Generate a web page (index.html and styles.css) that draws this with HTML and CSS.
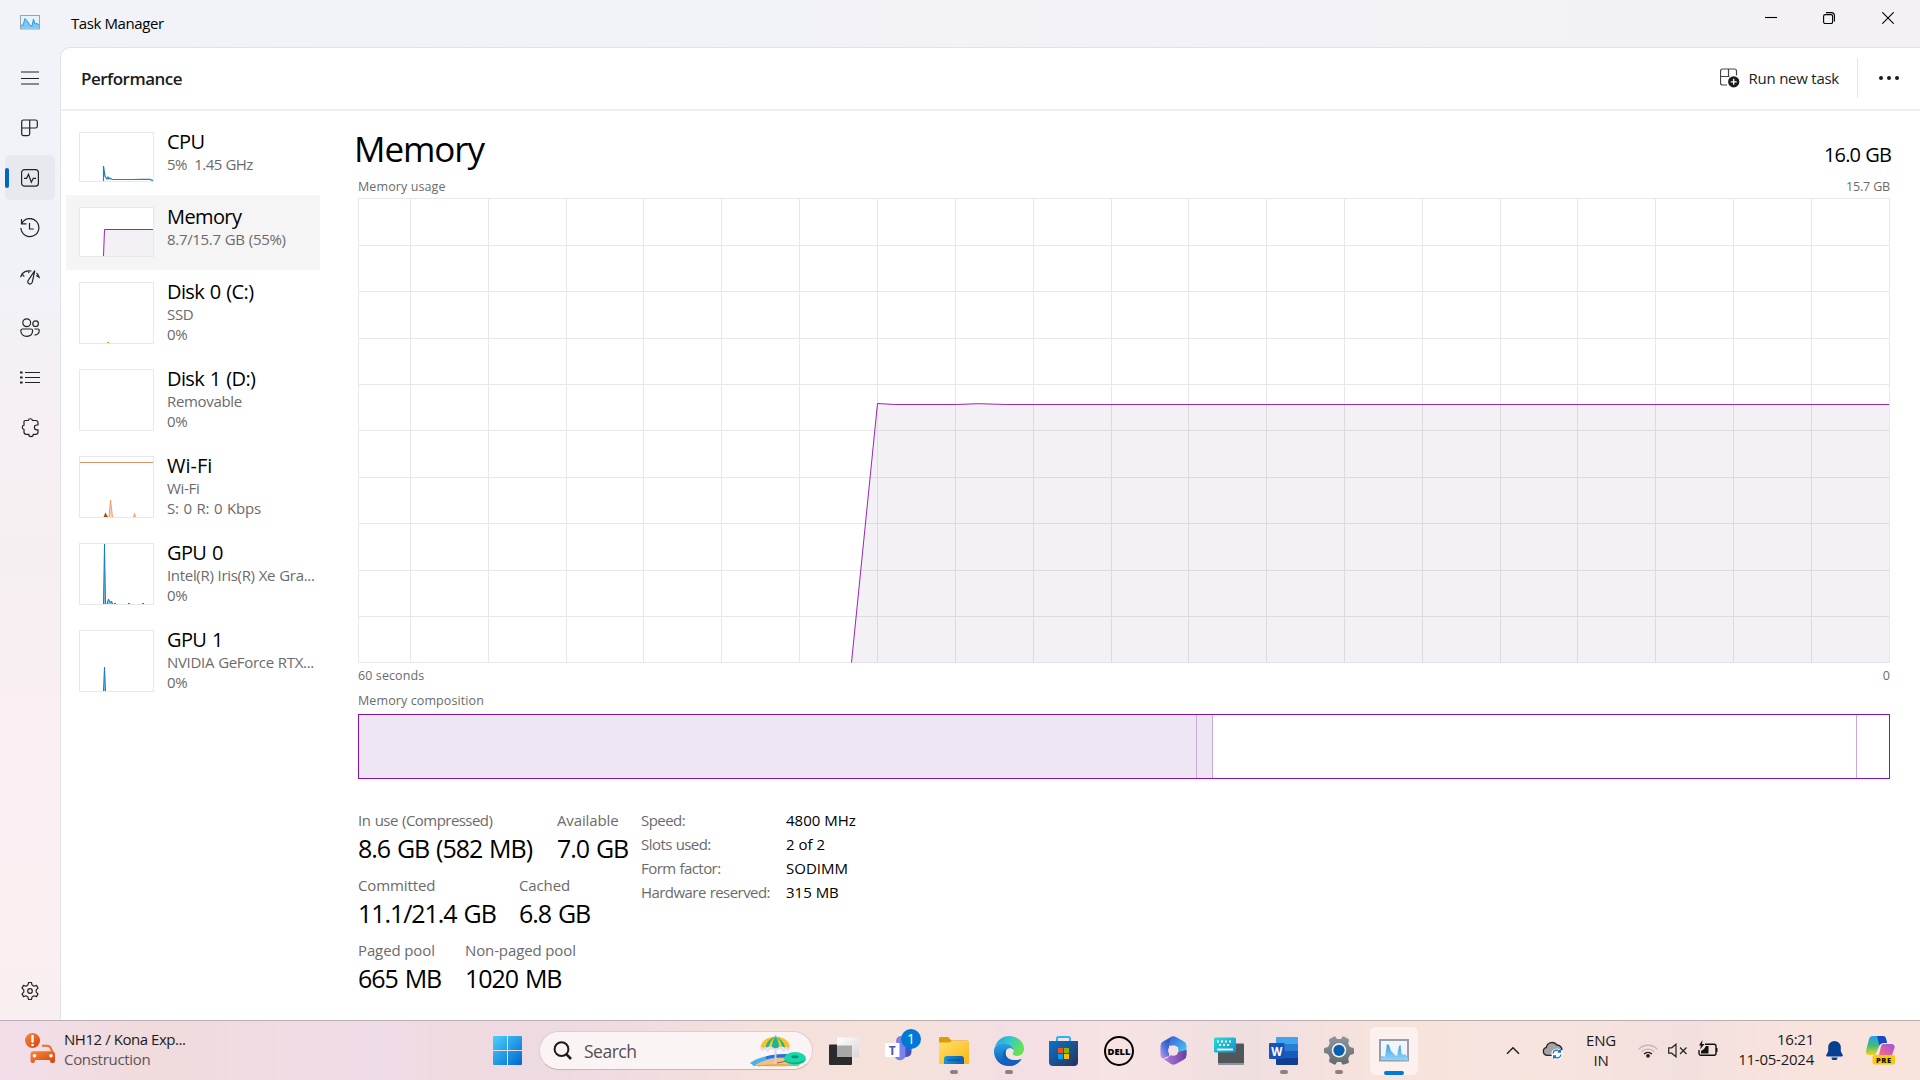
FILE: index.html
```html
<!DOCTYPE html>
<html lang="en">
<head>
<meta charset="utf-8">
<title>Task Manager</title>
<link rel="stylesheet" href="styles.css">
</head>
<body>
<div class="window">
  <aside class="rail">
    <div class="rail-logo">
      <svg width="20" height="15" viewBox="0 0 20 15"><rect x=".5" y=".5" width="19" height="13.500" fill="#e3f2fb" stroke="#97a5b1"/><path d="M1 13.500V10l2 .5L5 4l2.500 2L10 10.500l2 .5L13.500 4l1.500 5 2-.5L19 10v3.500z" fill="#7cc8f8"/><path d="M1 10l2 .5L5 3.500l2.500 3L10 10.500l2 .5L13.500 4l1.500 5 2-.5L19 10" fill="none" stroke="#2f96e0"/></svg>
    </div>
    <nav class="rail-nav">
      <a class="rail-item"><svg class="ic" viewBox="0 0 20 20"><path d="M1 4h18M1 10.500h18M1 16h18"/></svg></a>
      <a class="rail-item"><svg class="ic" viewBox="0 0 20 20"><path d="M3.500 2h12a1.800 1.800 0 0 1 1.800 1.800v4.400A1.800 1.800 0 0 1 15.500 10H9.700v5.800a1.800 1.800 0 0 1-1.800 1.800H3.500a1.800 1.800 0 0 1-1.800-1.800V3.800A1.800 1.800 0 0 1 3.500 2zM9.700 2v8M1.700 10h8"/></svg></a>
      <a class="rail-item active"><svg class="ic" viewBox="0 0 20 20"><rect x="1.600" y="1.600" width="16.800" height="16.600" rx="3"/><path d="M4 10.300h2.600l1.900-4 2.800 8 2-4H16"/></svg></a>
      <a class="rail-item"><svg class="ic" viewBox="0 0 20 20"><path d="M1.500 1v4.800h5M1.800 5.600A9 9 0 1 1 .9 10M9.500 5v6h4.300"/></svg></a>
      <a class="rail-item"><svg class="ic" viewBox="0 0 20 20"><path d="M.6 9.200L2 6l2.300 2.700M2 6C4.300 3.200 8 2.400 11.500 3M16.500 5c1.200 1 2 2.500 2.600 4.200l-2.900-1.700M8.300 2.800l.6 2.400M14.800 2.700L8 12.700a2.300 2.300 0 0 0 3.600 2.700c1-1 1-2.600 1.400-4.500z"/></svg></a>
      <a class="rail-item"><svg class="ic" viewBox="0 0 20 20"><g transform="translate(0 -.5)"><circle cx="6.700" cy="5.200" r="3.900"/><circle cx="15.600" cy="6.200" r="2.800"/><path d="M2.700 11.500h8.400a1.500 1.500 0 0 1 1.500 1.500c0 3.800-2.600 5.800-5.900 5.800S.8 16.800.8 13a1.700 1.700 0 0 1 1.900-1.500zM14.500 11.500h3.300A1.400 1.400 0 0 1 19.200 13c0 3-2 4.600-4.700 4.400"/></g></svg></a>
      <a class="rail-item"><svg class="ic" viewBox="0 0 20 20"><path d="M5 4.500h15M5 9.500h15M5 14.500h15"/><path d="M0 4.500h2.600M0 9.500h2.600M0 14.500h2.600" stroke-width="2.200"/></svg></a>
      <a class="rail-item"><svg class="ic" viewBox="0 0 20 20"><path transform="translate(0 -.8)" d="M5.200 3.300h3a2.200 2.200 0 0 1 4.300 0h3.200a2.300 2.300 0 0 1 2.300 2.300v2.200h-1.200a2.400 2.400 0 0 0 0 4.800H18v2.200a2.300 2.300 0 0 1-2.300 2.300h-2.400a2.300 2.300 0 0 1-4.600 0H6.300A2.300 2.300 0 0 1 4 14.800v-2.500a2.200 2.200 0 0 1 0-4.300V4.500a1.200 1.200 0 0 1 1.200-1.200z"/></svg></a>
    </nav>
    <a class="rail-item"><svg class="ic" viewBox="0 0 20 20"><circle cx="10" cy="10" r="2.300"/><path d="M8.600 1.500h2.800l.7 2.600 1.900 1.100 2.500-.8 1.500 2.700-1.800 1.800v2.200l1.800 1.800-1.500 2.700-2.500-.8-1.900 1.100-.7 2.600H8.600l-.7-2.600L6 14.800l-2.500.8L2 12.900l1.800-1.800V8.900L2 7.100l1.500-2.700 2.500.8 1.900-1.100z" stroke-linejoin="round"/></svg></a>
  </aside>
  <div class="frame">
    <header class="titlebar">
      <span class="app-title">Task Manager</span>
      <div class="caption">
        <svg viewBox="0 0 12 12"><path d="M0 5.500h12"/></svg>
        <svg viewBox="0 0 12 12"><rect x=".6" y="2.600" width="9" height="9" rx="1.600"/><path d="M3 .6h5.400a3 3 0 0 1 3 3V9.500"/></svg>
        <svg viewBox="0 0 12 12"><path d="M.3.300l11.400 11.400M11.700.300L.3 11.700"/></svg>
      </div>
    </header>
    <main class="panel">
      <div class="toolbar">
        <h1 class="page-name">Performance</h1>
        <div class="run">
          <svg width="20" height="20" viewBox="0 0 20 20"><path d="M16.500 7.500V3a2 2 0 0 0-2-2h-12a2 2 0 0 0-2 2v12a2 2 0 0 0 2 2H7M8.500 1v7.500M.5 8.500h9" fill="none" stroke="#444" stroke-width="1.200"/><circle cx="13.700" cy="13.800" r="5.600" fill="#1b1b1b"/><path d="M13.700 10.800v6M10.700 13.800h6" stroke="#fff" stroke-width="1.300"/></svg>
          <span>Run new task</span>
        </div>
        <div class="more"><i></i><i></i><i></i></div>
      </div>
      <div class="content">
        <ul class="devices">
          <li class="device short"><svg class="thumb" viewBox="0 0 75 50"><path d="M24.500 49V34l1.500 10 2 3 1-2 1 2 1-1 2 1.500h20l10-.2h8l2 1h2" class="cpu"/></svg><div><b>CPU</b><p class="speed">5%&nbsp; 1.45 GHz</p></div></li>
          <li class="device short selected"><svg class="thumb" viewBox="0 0 75 50"><path d="M24.500 49L25.500 22.500H74V49z" class="mem-fill"/><path d="M24.500 49L25.500 22.500H74" class="mem"/></svg><div><b>Memory</b><p>8.7/15.7 GB (55%)</p></div></li>
          <li class="device"><svg class="thumb" viewBox="0 0 75 62"><path d="M28.500 60.500h1.500" class="disk"/></svg><div><b>Disk 0 (C:)</b><p>SSD</p><p>0%</p></div></li>
          <li class="device"><svg class="thumb" viewBox="0 0 75 62"></svg><div><b>Disk 1 (D:)</b><p>Removable</p><p>0%</p></div></li>
          <li class="device"><svg class="thumb" viewBox="0 0 75 62"><path d="M1 6.500h73" class="net-line"/><path d="M24.500 61l2-4.500 2.500 4.500z" class="net-fill"/><path d="M30 61l1.500-17L33.500 61M54.500 61l1-3.500 1.200 3.500" class="net"/></svg><div><b class="wide">Wi-Fi</b><p>Wi-Fi</p><p class="wide-sub">S: 0 R: 0 Kbps</p></div></li>
          <li class="device"><svg class="thumb" viewBox="0 0 75 62"><path d="M24.500 61L25.500 1 26.500 61M28 61l1.500-5 2 4 1-2 1 3" class="gpu"/><path d="M35 60.500h2M49 60.500h2M63 60.500h2" class="cpu"/></svg><div><b>GPU 0</b><p>Intel(R) Iris(R) Xe Gra...</p><p>0%</p></div></li>
          <li class="device"><svg class="thumb" viewBox="0 0 75 62"><path d="M24.500 61l1-24 1 24" class="gpu"/></svg><div><b>GPU 1</b><p>NVIDIA GeForce RTX...</p><p>0%</p></div></li>
        </ul>
        <section class="detail">
          <div class="head"><h2>Memory</h2><span class="total">16.0 GB</span></div>
          <div class="cap"><span>Memory usage</span><span class="max">15.7 GB</span></div>
          <svg class="chart" viewBox="0 0 1532 465">
            <path class="grid" d="M.5 0V465M52.500 0V465M130.500 0V465M208.500 0V465M285.500 0V465M363.500 0V465M441.500 0V465M519.500 0V465M597.500 0V465M675.500 0V465M753.500 0V465M830.500 0V465M908.500 0V465M986.500 0V465M1064.500 0V465M1142.500 0V465M1219.500 0V465M1297.500 0V465M1375.500 0V465M1453.500 0V465M1531.500 0V465M0 .5H1532M0 47.500H1532M0 93.500H1532M0 140.500H1532M0 186.500H1532M0 232.500H1532M0 279.500H1532M0 325.500H1532M0 372.500H1532M0 418.500H1532M0 464.500H1532"/>
            <path class="mem-fill" d="M493.500 464.500L519.500 205.500l17 1h62l22-.8 28 .8H1531v258z"/>
            <path class="mem" d="M493.500 464.500L519.500 205.500l17 1h62l22-.8 28 .8H1531"/>
          </svg>
          <div class="cap cap-time"><span>60 seconds</span><span>0</span></div>
          <div class="cap cap-comp"><span>Memory composition</span></div>
          <div class="composition"><div class="used"></div><div class="modified"></div><div class="standby"></div><div class="free"></div></div>
          <div class="stats">
            <div class="stat-rows">
              <div class="stat-row"><dl class="usage"><dt class="tight">In use (Compressed)</dt><dd>8.6 GB (582 MB)</dd></dl><dl><dt>Available</dt><dd>7.0 GB</dd></dl></div>
              <div class="stat-row"><dl class="commit"><dt>Committed</dt><dd>11.1/21.4 GB</dd></dl><dl><dt>Cached</dt><dd>6.8 GB</dd></dl></div>
              <div class="stat-row"><dl class="pool"><dt>Paged pool</dt><dd>665 MB</dd></dl><dl><dt>Non-paged pool</dt><dd>1020 MB</dd></dl></div>
            </div>
            <div class="facts">
              <span>Speed:</span><em>4800 MHz</em>
              <span>Slots used:</span><em>2 of 2</em>
              <span>Form factor:</span><em>SODIMM</em>
              <span>Hardware reserved:</span><em>315 MB</em>
            </div>
          </div>
        </section>
      </div>
    </main>
  </div>
</div>
<footer class="taskbar">
  <div class="widget">
    <svg width="30" height="30" viewBox="0 0 30 30">
      <defs><linearGradient id="org" x1="0" y1="0" x2="1" y2="1"><stop offset="0" stop-color="#f58a3c"/><stop offset="1" stop-color="#d9400a"/></linearGradient></defs>
      <circle cx="7.500" cy="7.500" r="7.500" fill="url(#org)"/><path d="M7.500 3v5.500" stroke="#fff" stroke-width="2.400" stroke-linecap="round"/><circle cx="7.500" cy="12" r="1.300" fill="#fff"/>
      <path d="M17 12.700h5c2 0 3 .8 3.700 2.300l2 4.500" fill="none" stroke="#ef6c2a" stroke-width="2"/>
      <path d="M8 18.300h19c2 0 3 1.500 3 3.500V28a2 2 0 0 1-2 2h-1a2 2 0 0 1-2-2v-1H10v1a2 2 0 0 1-2 2H7.500a2 2 0 0 1-2-2v-7a3 3 0 0 1 2.500-2.700z" fill="url(#org)"/><circle cx="9.500" cy="22.700" r="1.800" fill="#fff"/><circle cx="26" cy="22.700" r="1.800" fill="#fff"/>
    </svg>
    <div><p class="w1">NH12 / Kona Exp...</p><p class="w2">Construction</p></div>
  </div>
  <div class="apps">
    <div class="app start">
      <svg width="29" height="29" viewBox="0 0 29 29"><defs><linearGradient id="win" x1="0" y1="0" x2="1" y2="1"><stop offset="0" stop-color="#4cd0fb"/><stop offset="1" stop-color="#0067cf"/></linearGradient></defs><path d="M1 0h13v14H0V1a1 1 0 0 1 1-1zM15 0h13a1 1 0 0 1 1 1v13H15zM0 15h14v14H1a1 1 0 0 1-1-1zM15 15h14v13a1 1 0 0 1-1 1H15z" fill="url(#win)"/></svg>
    </div>
    <div class="search">
      <svg width="20" height="20" viewBox="0 0 20 20"><circle cx="8.500" cy="8.200" r="6.900" fill="none" stroke="#1c1c1c" stroke-width="2"/><path d="M13.300 13.200l4.700 4.800" stroke="#1c1c1c" stroke-width="2.600"/></svg>
      <span>Search</span>
      <svg class="beach" width="56" height="32" viewBox="0 0 56 32">
        <path d="M0 28C10 21 24 19 39 19l8 2-9 4-20 5-14 1z" fill="#45b4ec"/><path d="M16 21.500c6-1.800 14-2.500 23-2.500l-2 4c-9-1-15-.500-21 1z" fill="#2a6fe0"/>
        <path d="M5 30c8-5 20-8 32-7l14 7c-10 2-38 2-46 0z" fill="#f1c185"/><path d="M8 31c12-1.500 34-1.500 41 0" stroke="#d79a50" fill="none"/>
        <ellipse cx="45" cy="23.500" rx="11" ry="6.500" fill="#17d8a8"/><path d="M34.500 25c1 5 20 6 21-1-3 4-17 5-21 1z" fill="#10a98a"/><ellipse cx="45" cy="21.800" rx="3.600" ry="1.500" fill="#0c8f78"/>
        <path d="M25.500 12V29" stroke="#ded0e4" stroke-width="1.800"/><path d="M27 28l10-2" stroke="#9c6a3c" stroke-width="1"/>
        <path d="M10.500 12C12 5 18 2 25.500 1.500 33 2 39 5 40 12l-3 1.500-5-2-6.500 2-6.500-2-5 2z" fill="#fbc02d"/>
        <path d="M25.500 1.500C18 5 16 8 16 12.500l3-1c1-5 3-7 6.500-10zM25.500 1.500C32 5 34.500 8 35 12.500l-3-1c-.6-5-3-7-6.500-10zM22 12.500l3.500 1 3.500-1c0-4-1-8-3.500-11-2.500 3-3.500 7-3.500 11z" fill="#19b88e"/>
        <path d="M10.500 12l2 3 2.500-2 2.500 2.500 3-3 5 2.500 5-2.500 3 3 2.500-2.500 2 2 2-3" fill="none" stroke="#e6dbf0" stroke-width="2"/><circle cx="25.500" cy="1.200" r="1" fill="#bdb0c8"/>
      </svg>
    </div>
    <div class="app">
      <svg width="30" height="28" viewBox="0 0 30 28"><defs><linearGradient id="tv" x1="0" y1="0" x2="1" y2="1"><stop offset="0" stop-color="#fff"/><stop offset="1" stop-color="#d9d6d6"/></linearGradient></defs><rect y="7.500" width="23" height="20.500" rx="1" fill="#2b2b2b"/><rect x="8" y=".5" width="22" height="19.500" rx="1" fill="url(#tv)"/><path d="M8 8.500h15V20H9a1 1 0 0 1-1-1z" fill="#a9a8a8"/></svg>
    </div>
    <div class="app">
      <svg class="teams" width="34" height="34" viewBox="0 0 34 34">
        <circle cx="16" cy="12" r="5" fill="#7b83eb"/><path d="M17 15h9.500v8a5 5 0 0 1-5 5H17z" fill="#4b53bc"/><path d="M10 15h10.500v11a5.500 5.500 0 0 1-10.500 2z" fill="#7b83eb"/><path d="M14 15v13h-4z" fill="#5059c9"/>
        <rect y="14" width="14.500" height="14" fill="#fff"/><text x="7.300" y="25.500" text-anchor="middle" class="svg-t" fill="#4b53bc">T</text>
      </svg>
      <span class="badge">1</span>
    </div>
    <div class="app running">
      <svg width="30" height="27" viewBox="0 0 30 27"><defs><linearGradient id="fo" x1="0" y1="0" x2="1" y2="1"><stop offset="0" stop-color="#ffe068"/><stop offset="1" stop-color="#fbb614"/></linearGradient><linearGradient id="fb" x1="0" y1="0" x2="1" y2="0"><stop offset="0" stop-color="#1b93dc"/><stop offset="1" stop-color="#0b5fae"/></linearGradient></defs><path d="M0 1.500A1.500 1.500 0 0 1 1.500 0H9l3.500 3.500H28A2 2 0 0 1 30 5v3H0z" fill="#dd9b08"/><path d="M0 5.500h10L13 4h17v22a1 1 0 0 1-1 1H1a1 1 0 0 1-1-1z" fill="url(#fo)"/><path d="M5 27v-5a3 3 0 0 1 3-3h14a3 3 0 0 1 3 3v5z" fill="url(#fb)"/><path d="M8.500 23h13" stroke="#0a4a8c" stroke-width="1"/></svg>
    </div>
    <div class="app running">
      <svg width="30" height="30" viewBox="0 0 30 30"><defs><linearGradient id="e1" x1="0" y1="0" x2="1" y2=".4"><stop offset="0" stop-color="#1ea0e8"/><stop offset=".5" stop-color="#36c6cf"/><stop offset="1" stop-color="#66e352"/></linearGradient><linearGradient id="e2" x1="0" y1="0" x2="0" y2="1"><stop offset="0" stop-color="#2aa5e8"/><stop offset="1" stop-color="#0c56ad"/></linearGradient></defs>
        <path d="M1 11C3 4 8.500 0 15 0c8.500 0 15 6 15 12.500 0 4.500-3 7.500-7.500 7.500-3.500 0-4.500-1.500-4-2.500 1-1 1-2 1-3C19 10 15 7 10 7 6 7 3 8.500 1 11z" fill="url(#e1)"/>
        <path d="M0 15.500C0 10 4 7 10 7c5 0 9 3 9.300 7-1.300-2.500-7.300-3-7.800 2.500-.3 5.500 5.500 9.500 15.500 6.500-2 4.500-7 7-12 7C6.500 30 0 24 0 15.500z" fill="url(#e2)"/><path d="M11.500 13c-4 3.500-4 13 3.500 17 5 0 10-2.500 12.500-7-9.500 3-15.700-1-15.500-6.500z" fill="#1261c0"/><path d="M11.700 17c0-4 5-6 7.500-3 .8 2-1.500 3.500 0 5 2.500 2 8 1 9 1l-1.500 3c-8 2.500-15 0-15-6z" fill="#f6e4df"/></svg>
    </div>
    <div class="app">
      <svg width="29" height="30" viewBox="0 0 29 30"><defs><linearGradient id="st" x1="0" y1="0" x2="1" y2="1"><stop offset="0" stop-color="#0b74c8"/><stop offset="1" stop-color="#27305c"/></linearGradient></defs><path d="M8 7V2.500A1.500 1.500 0 0 1 9.500 1h10A1.500 1.500 0 0 1 21 2.500V7" fill="none" stroke="#27b5f4" stroke-width="2"/><path d="M0 5h29v21a4 4 0 0 1-4 4H4a4 4 0 0 1-4-4z" fill="url(#st)"/><path d="M9 12h5v5H9z" fill="#f25022"/><path d="M15 12h5v5h-5z" fill="#7fba00"/><path d="M9 18h5v5H9z" fill="#00a4ef"/><path d="M15 18h5v5h-5z" fill="#ffb900"/></svg>
    </div>
    <div class="app">
      <svg width="30" height="30" viewBox="0 0 30 30"><circle cx="15" cy="15" r="14" fill="none" stroke="#000" stroke-width="2"/><text x="15" y="18.600" text-anchor="middle" textLength="23" lengthAdjust="spacingAndGlyphs" class="dell">DELL</text></svg>
    </div>
    <div class="app">
      <svg width="27" height="29" viewBox="0 0 27 29"><defs><linearGradient id="m1" x1="0" y1="1" x2="1" y2="0"><stop offset="0" stop-color="#d09af0"/><stop offset=".5" stop-color="#3f6fd8"/><stop offset="1" stop-color="#2b3fae"/></linearGradient><linearGradient id="m2" x1="0" y1="0" x2="1" y2="1"><stop offset="0" stop-color="#3c5fd8"/><stop offset="1" stop-color="#48d2f5"/></linearGradient><linearGradient id="m3" x1="0" y1="0" x2="1" y2="0"><stop offset="0" stop-color="#b47fe6"/><stop offset="1" stop-color="#6a3f9c"/></linearGradient></defs><path d="M12 .5L3 5.500A5 5 0 0 0 .5 10v9c0 1.500 1 3 2.500 3.500L9 20V9.500z" fill="url(#m1)"/><path d="M12 .5c2-.7 3 0 4 .5l8 4.500A5 5 0 0 1 26.500 10v9L18 16v-5L9 9.500C9 5 9.500 2 12 .5z" fill="url(#m2)"/><path d="M26.500 14v5a5 5 0 0 1-2.500 4.500L16 28a5 5 0 0 1-5 0l-8-5.500c3 1 5-.5 6-2.500l9-4z" fill="url(#m3)"/><circle cx="13.300" cy="14.500" r="5.200" fill="#f4e2e3"/></svg>
    </div>
    <div class="app">
      <svg width="30" height="28" viewBox="0 0 30 28"><defs><linearGradient id="kb" x1="0" y1="0" x2="1" y2="1"><stop offset="0" stop-color="#25e0cf"/><stop offset="1" stop-color="#128dd0"/></linearGradient></defs><rect x="4" y="6.500" width="26" height="21" rx="1" fill="#50565a"/><path d="M4 26h26v1a1 1 0 0 1-1 1H5a1 1 0 0 1-1-1z" fill="#8d959a"/><rect y=".5" width="22" height="15" rx="1.500" fill="url(#kb)"/><path d="M3 4.500h16M5 8h12" stroke="#fff" stroke-width="2" stroke-dasharray="2 2"/><path d="M3 12.500h16" stroke="#fff" stroke-width="1.800"/></svg>
    </div>
    <div class="app running">
      <svg width="29" height="28" viewBox="0 0 29 28"><path d="M7 1a1 1 0 0 1 1-1h20a1 1 0 0 1 1 1v6H7z" fill="#41a5ee"/><path d="M7 7h22v7H7z" fill="#2b7cd3"/><path d="M7 14h22v7H7z" fill="#185abd"/><path d="M7 21h22v6a1 1 0 0 1-1 1H8a1 1 0 0 1-1-1z" fill="#103f91"/><rect y="6" width="15.500" height="16" rx="1" fill="#1b52b5"/><text x="7.700" y="18.500" text-anchor="middle" class="svg-w">W</text></svg>
    </div>
    <div class="app running">
      <svg width="30" height="29" viewBox="0 0 30 29"><defs><linearGradient id="ge" x1="0" y1="0" x2="0" y2="1"><stop offset="0" stop-color="#8d969c"/><stop offset="1" stop-color="#626b70"/></linearGradient></defs><path d="M10 .5h1.500L13 3h4l1.500-2.500H20l4.500 2.500.5 1-.8 3.500 1.800 3.500 3.500 1 .5 1v4l-.5 1-3.500 1-1.800 3.500.8 3.500-.5 1L20 28.500h-1.500L17 26h-4l-1.500 2.500H10L5.500 26l-.5-1 .8-3.500L4 18l-3.500-1L0 16v-3l.5-1L4 11l1.800-3.500L5 4l.5-1z" fill="url(#ge)"/><circle cx="15" cy="14.300" r="7.200" fill="#f2f2f2"/><circle cx="15" cy="14.300" r="5.600" fill="#0c5fb0"/></svg>
    </div>
    <div class="app running current">
      <svg width="30" height="23" viewBox="0 0 30 23"><defs><linearGradient id="tm" x1="0" y1="0" x2="0" y2="1"><stop offset="0" stop-color="#3f9fe0"/><stop offset="1" stop-color="#8ed6fb"/></linearGradient></defs><rect x="1" y="1" width="28" height="20.500" fill="#f1f5f7" stroke="#93a0a9" stroke-width="2"/><path d="M2 20.500V17l4 .5L8 5l2 1 2 6 4 4 2 1 2-10 1.500-1 1 8 1.500 2 2-1 3 4v2.500z" fill="url(#tm)"/></svg>
    </div>
  </div>
  <div class="tray">
    <svg class="chev" width="14" height="9" viewBox="0 0 14 9"><path d="M1 7.800l6-6 6 6" fill="none" stroke="#222" stroke-width="1.500"/></svg>
    <svg class="cloud" width="21" height="19" viewBox="0 0 21 19"><path d="M5 15a4.300 4.300 0 0 1-.5-8.400A6 6 0 0 1 15 4.300 5 5 0 0 1 20 9" fill="#a3a3a3"/><path d="M10 14.300H5A4.100 4.100 0 0 1 4.300 6.300 6 6 0 0 1 15 4a5 5 0 0 1 5 5" fill="#a3a3a3" stroke="#252525" stroke-width="1.300"/><circle cx="15" cy="13" r="5.600" fill="#fff"/><path d="M11 12.500a4 4 0 0 1 7-2M18.300 8.500v2.500h-2.500M19 13.500a4 4 0 0 1-7 2M11.700 17.500V15h2.500" fill="none" stroke="#1b6ec2" stroke-width="1.300"/></svg>
    <div class="lang">ENG<br>IN</div>
    <svg class="wifi" width="20" height="15" viewBox="0 0 20 15"><g fill="none" stroke-width="1.400"><path d="M.6 6.200a13 13 0 0 1 18.800 0M3.500 8.700a9.500 9.500 0 0 1 13 0" stroke="#c9b7b7"/><path d="M6 11a6 6 0 0 1 8 0" stroke="#222"/></g><circle cx="10" cy="12.800" r="1.900" fill="#222"/></svg>
    <svg class="vol" width="20" height="15" viewBox="0 0 20 15"><path d="M.7 4.800h3L8 1.200v12.600l-4.300-3.600h-3z" fill="none" stroke="#222" stroke-width="1.200"/><path d="M12 4.500l6.500 6.500M18.500 4.500L12 11" stroke="#222" stroke-width="1.200"/></svg>
    <svg class="bat" width="20" height="17" viewBox="0 0 20 17"><path d="M7 4.300h9a2 2 0 0 1 2 2v7a2 2 0 0 1-2 2H3a2 2 0 0 1-2-2V10" fill="none" stroke="#111" stroke-width="1.400"/><path d="M3 13.500V11l3-2 2-3h2.500v7.500z" fill="#111"/><path d="M18 8h1.500v4H18z" fill="#111"/><path d="M4.500 0L1 5.500h2L2 9.500l4.500-5.500H4z" fill="#111"/></svg>
    <div class="clock">16:21<br>11-05-2024</div>
    <svg class="bell" width="17" height="19" viewBox="0 0 17 19"><path d="M8.500 0A6.300 6.300 0 0 0 2.200 6.300v4L.3 14a1 1 0 0 0 .9 1.500h14.600a1 1 0 0 0 .9-1.500l-1.900-3.700v-4A6.300 6.300 0 0 0 8.500 0zM5.500 16.500a3 3 0 0 0 6 0z" fill="#053f92"/></svg>
    <svg class="copilot" width="30" height="29" viewBox="0 0 30 29"><defs><linearGradient id="c1" x1="0" y1="0" x2="0" y2="1"><stop offset="0" stop-color="#1fa2f0"/><stop offset=".5" stop-color="#3fba7c"/><stop offset="1" stop-color="#f5d21f"/></linearGradient><linearGradient id="c2" x1="1" y1="0" x2="0" y2="1"><stop offset="0" stop-color="#a04fe6"/><stop offset="1" stop-color="#f76d7a"/></linearGradient></defs><path d="M6 0h11a3 3 0 0 1 3 2.500L21 7h-4a4 4 0 0 0-3.600 2.500L10 17.500c-.5 1-1 1.500-2 1.500H3a3 3 0 0 1-3-4L3 3a4 4 0 0 1 3-3z" fill="url(#c1)"/><path d="M11 0h6a3 3 0 0 1 3 2.500L21 7h-4a4 4 0 0 0-3.600 2.500z" fill="#1748c8"/><path d="M17.500 8h8a3 3 0 0 1 3 4L26 19H13l2-8.500A3 3 0 0 1 17.500 8z" fill="url(#c2)"/><rect x="6.500" y="19" width="22.500" height="9.500" rx="2" fill="#fcc80c"/><text x="17.800" y="26.800" text-anchor="middle" class="pre">PRE</text></svg>
  </div>
</footer>
</body>
</html>
```
FILE: styles.css
```css
* { box-sizing: border-box; margin: 0; padding: 0; }
body { width: 1920px; height: 1080px; overflow: hidden; font: 15px/20px "Open Sans", "Noto Sans", sans-serif; color: #000; }
svg { display: block; flex: none; }
ul { list-style: none; }
em { font-style: normal; }

.window { display: flex; height: 1020px; background: linear-gradient(90deg, #f1f3f9, #f3f1f6); }

/* navigation rail */
.rail { width: 60px; display: flex; flex-direction: column; padding-bottom: 4px; background: linear-gradient(#f1f3f9 0, #f1f2f8 280px, #f5f0f4 380px, #f6eff2 560px, #fbeff3 760px, #f9eff0 1020px); }
.rail-logo { height: 53px; padding: 15px 20px; }
.rail-nav { flex: 1; }
.rail-item { display: flex; height: 50px; justify-content: center; align-items: center; position: relative; }
.rail-item.active { height: 45px; margin: 2px 5px 3px; background: #e7e9ee; border-radius: 5px; }
.rail-item.active::before { content: ""; position: absolute; left: 0; top: 13px; width: 4px; height: 20px; border-radius: 2px; background: #0067c0; }
.ic { width: 20px; height: 20px; fill: none; stroke: #222; stroke-width: 1.2; }

/* frame */
.frame { flex: 1; display: flex; flex-direction: column; }
.titlebar { height: 47px; display: flex; justify-content: space-between; padding: 13px 26px 0 11px; }
.app-title { letter-spacing: -.4px; }
.caption { display: flex; gap: 47px; margin-top: -1px; }
.caption svg { width: 12px; height: 12px; fill: none; stroke: #000; stroke-width: 1.1; }
.caption svg:first-child { margin-right: -1px; }
.panel { flex: 1; background: #fff; border: solid #e1e1e9; border-width: 1px 0 0 1px; border-top-left-radius: 10px; }
.toolbar { height: 63px; display: flex; align-items: center; padding: 0 21px 2px 20px; border-bottom: 2px solid #efeff3; }
.page-name { flex: 1; padding-top: 2px; font-size: 17px; line-height: 24px; font-weight: 600; letter-spacing: -.5px; color: #1b1b1b; }
.run { display: flex; align-items: center; gap: 9px; height: 40px; padding-right: 18px; border-right: 1px solid #e6e6e6; letter-spacing: -.25px; color: #222; }
.more { display: flex; gap: 4px; padding-left: 21px; }
.more i { width: 4px; height: 4px; border-radius: 50%; background: #1b1b1b; }
.content { display: flex; }

/* device list */
.devices { width: 297px; padding: 9px 0 0 5px; }
.device { display: flex; gap: 13px; width: 254px; height: 87px; padding: 9px 0 0 13px; }
.device.short { height: 75px; }
.device.selected { background: #f5f5f5; }
.thumb { width: 75px; height: 62px; margin-top: 3px; background: #fff; outline: 1px solid #e8e8e8; outline-offset: -1px; fill: none; }
.short .thumb { height: 50px; }
.device b { display: block; font-weight: 400; font-size: 20px; line-height: 25px; letter-spacing: -.6px; word-spacing: 1px; }
.device b.wide { letter-spacing: 0; }
.device p { color: #6b6b6b; letter-spacing: -.32px; word-spacing: .5px; white-space: nowrap; }
.device p.speed { letter-spacing: -.6px; }
.device p.wide-sub { letter-spacing: -.2px; word-spacing: 1px; }
.cpu { stroke: #2182b8; stroke-width: 1.2; }
.gpu { stroke: #117dbb; fill: #8cc0df; stroke-width: 1; }
.mem { stroke: #9528b4; fill: none; }
.mem-fill { fill: rgba(110, 70, 140, .075); }
.disk { stroke: #4da60c; }
.net-line { stroke: #cf9468; }
.net-fill { fill: #a74f01; }
.net { stroke: #e58a5e; fill: #f6d3c2; stroke-width: .8; }

/* memory detail */
.detail { width: 1532px; padding-top: 14px; }
.head { display: flex; justify-content: space-between; align-items: baseline; height: 52px; }
.head h2 { margin-left: -4px; font-size: 35px; line-height: 48px; font-weight: 400; letter-spacing: -1.1px; }
.total { font-size: 20px; letter-spacing: -.9px; word-spacing: 1px; margin-right: -1px; }
.cap { display: flex; justify-content: space-between; height: 21px; font-size: 12.5px; letter-spacing: .1px; color: #6b6b6b; }
.max { letter-spacing: -.15px; }
.chart { width: 1532px; height: 465px; fill: none; }
.grid { stroke: #e8e8e8; shape-rendering: crispEdges; }
.cap-time { padding-top: 3px; height: 28px; }
.cap-comp { height: 23px; }
.composition { display: flex; height: 65px; border: 1px solid #8b12ae; }
.composition div { border-right: 1px solid #cba6d9; }
.used { width: 838px; background: #eee6f2; }
.modified { width: 16px; background: #eee6f2; }
.standby { width: 644px; }
.composition .free { flex: 1; border: 0; }

.stats { display: flex; padding-top: 31px; }
.stat-rows { display: flex; flex-direction: column; gap: 10px; width: 283px; white-space: nowrap; }
.stat-row { display: flex; }
.usage { width: 199px; }
.commit { width: 161px; }
.pool { width: 107px; }
dt { color: #6b6b6b; letter-spacing: -.12px; }
dt.tight { letter-spacing: -.55px; word-spacing: 1px; }
dd { padding-top: 1px; font-size: 25px; line-height: 34px; letter-spacing: -1.05px; word-spacing: 1.5px; }
.facts { display: grid; grid-template-columns: 145px auto; grid-auto-rows: 24px; }
.facts span { color: #6b6b6b; letter-spacing: -.55px; word-spacing: .5px; }

/* taskbar */
.taskbar { display: flex; align-items: center; height: 60px; border-top: 1px solid #b9aeb2; background: linear-gradient(90deg, #f2deea 0, #f0dcdc 150px, #efdce9 370px, #eedbdf 460px, #eedae2 560px, #f5e0dc 760px, #f5e2da 900px, #f3dfe4 1010px, #f7e3e3 1110px, #f0dfe0 1240px, #f7e3dc 1380px, #f8e4de 1560px, #f2e0de 1680px, #f9e3dd 1800px, #f9e3de 1920px); }
.widget { display: flex; gap: 9px; width: 480px; padding-left: 25px; }
.widget svg { margin-top: 3px; }
.widget div { margin-top: -1px; margin-bottom: 3px; }
.w1 { color: #1b1b1b; letter-spacing: -.45px; }
.w2 { color: #5c5458; letter-spacing: -.3px; }
.apps { display: flex; align-items: center; }
.app { position: relative; display: flex; width: 55px; height: 48px; align-items: center; justify-content: center; }
.app.start { margin-right: 4px; }
.search { display: flex; align-items: center; width: 274px; height: 39px; margin-right: 3px; padding: 0 6px 0 13px; border-radius: 20px; border: 1px solid #e0cccd; border-bottom-color: #c7b4b4; background: #fbf4f4; }
.search span { flex: 1; margin-left: 11px; font-size: 17.5px; letter-spacing: -.5px; color: #56504f; }
.running::after { content: ""; position: absolute; left: 23.5px; bottom: 1px; width: 8px; height: 4px; border-radius: 2px; background: #8c8080; }
.current { margin-left: 4px; width: 48px; background: #fcf1ee; border-radius: 5px; outline: 1px solid #f3e4e0; }
.current::after { left: 14px; bottom: 0; width: 20px; background: #0078d7; }
.teams { margin: -9px 0 0 6px; }
.badge { position: absolute; left: 30px; top: 2px; width: 20px; height: 20px; border-radius: 50%; background: #0078d7; color: #fff; text-align: center; font-size: 14px; }
.svg-t { font: 700 12px "Open Sans", sans-serif; }
.svg-w { font: 700 11.5px "Open Sans", sans-serif; fill: #fff; }
.dell { font: 800 9px "Open Sans", sans-serif; }
.pre { font: 800 7.5px "Open Sans", sans-serif; letter-spacing: .5px; fill: #111; }

/* system tray */
.tray { display: flex; align-items: center; flex: 1; justify-content: flex-end; padding-right: 24px; color: #1b1b1b; letter-spacing: -.25px; }
.cloud { margin-left: 22px; }
.lang { width: 40px; margin: -1px 0 0 18px; text-align: center; }
.wifi { margin: -1px 0 0 17px; }
.vol { margin: -1px 0 0 10px; }
.bat { margin: -5px 0 0 10px; }
.clock { width: 96px; margin-top: -3px; text-align: right; white-space: nowrap; }
.bell { margin-left: 12px; }
.copilot { margin-left: 23px; }
```
